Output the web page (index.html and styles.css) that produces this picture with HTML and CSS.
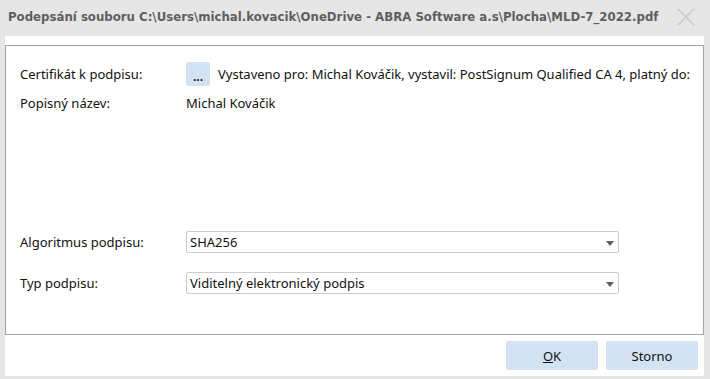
FILE: index.html
```html
<!DOCTYPE html>
<html lang="cs">
  <head>
    <meta charset="UTF-8" />
    <title>Podepsání souboru</title>
    <link rel="stylesheet" href="styles.css">
  </head>
  <body>
    <div class="titlebar">
      <div class="title">Podepsání souboru C:\Users\michal.kovacik\OneDrive - ABRA Software a.s\Plocha\MLD-7_2022.pdf</div>
      <svg class="close" width="18" height="18" viewBox="0 0 18 18">
        <path d="M1 1 L17 17 M17 1 L1 17" stroke="#c9c9c9" stroke-width="1.6" fill="none" />
      </svg>
    </div>
    <div class="window">
      <div class="panel">
        <div class="row row-cert">
          <div class="label">Certifikát k podpisu:</div>
          <div class="value">
            <button class="dots">...</button>
            <span class="cert-text">Vystaveno pro: Michal Kováčik, vystavil: PostSignum Qualified CA 4, platný do:</span>
          </div>
        </div>
        <div class="row row-name">
          <div class="label">Popisný název:</div>
          <div class="value">Michal Kováčik</div>
        </div>
        <div class="row row-algo">
          <div class="label">Algoritmus podpisu:</div>
          <div class="select"><span>SHA256</span><i class="arrow"></i></div>
        </div>
        <div class="row row-type">
          <div class="label">Typ podpisu:</div>
          <div class="select"><span>Viditelný elektronický podpis</span><i class="arrow"></i></div>
        </div>
      </div>
      <div class="footer">
        <button class="btn"><u>O</u>K</button>
        <button class="btn">Storno</button>
      </div>
    </div>
  </body>
</html>
```

FILE: styles.css
```css
body {
  margin: 0;
  background-color: #e6e6e6;
  font-family: "Noto Sans", "DejaVu Sans", sans-serif;
  font-size: 13px;
  color: #111;
  width: 710px;
  height: 379px;
  overflow: hidden;
}

.titlebar {
  height: 36px;
  display: flex;
  align-items: center;
  padding: 0 0 2px 8px;
  box-sizing: border-box;
}

.title {
  font-family: "DejaVu Sans", sans-serif;
  font-weight: bold;
  font-size: 11.75px;
  color: #5f5f5f;
  white-space: nowrap;
}

.close {
  margin-left: auto;
  margin-right: 15px;
}

.window {
  background-color: white;
  margin: 0 6px 0 5px;
  padding-top: 9px;
  height: 340px;
  box-sizing: border-box;
}

/* main bordered area */
.panel {
  border: 1px solid #a3a3a3;
  height: 290px;
  box-sizing: border-box;
  padding: 16px 4px 0 14px;
  overflow: hidden;
}

.row {
  display: flex;
  align-items: center;
}

.label {
  width: 166px;
  flex-shrink: 0;
}

.value {
  display: flex;
  align-items: center;
  white-space: nowrap;
}

.row-cert {
  height: 24px;
}

.row-name {
  height: 18px;
  margin-top: 8px;
}

.row-algo {
  height: 22px;
  margin-top: 119px;
}

.row-type {
  height: 22px;
  margin-top: 19px;
}

.dots {
  width: 24px;
  height: 24px;
  flex-shrink: 0;
  border: none;
  border-radius: 2px;
  background-color: #d3e3f3;
  font-family: inherit;
  font-size: 12px;
  font-weight: bold;
  color: #222;
  padding: 4px 0 0;
  margin-right: 8px;
}

.select {
  width: 433px;
  height: 22px;
  border: 1px solid #cdcdcd;
  border-radius: 2px;
  box-sizing: border-box;
  display: flex;
  align-items: center;
  padding: 0 0 0 3px;
  position: relative;
}

.arrow {
  position: absolute;
  right: 4px;
  top: 9px;
  width: 0;
  height: 0;
  border-left: 4px solid transparent;
  border-right: 4px solid transparent;
  border-top: 5px solid #606060;
}

.footer {
  display: flex;
  justify-content: flex-end;
  gap: 8px;
  padding: 6px 6px 0 0;
}

.btn {
  width: 92px;
  height: 29px;
  border: none;
  border-radius: 2px;
  background-color: #d3e3f3;
  font-family: inherit;
  font-size: 13px;
  color: #111;
}
```
